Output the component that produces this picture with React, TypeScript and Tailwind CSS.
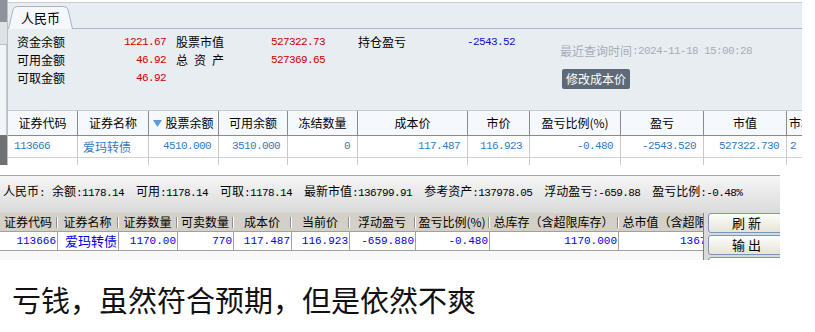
import type { ReactNode } from 'react'
import clsx from 'clsx'

const mono = "font-['Liberation_Mono',monospace] text-[11px] tracking-[-0.6px] whitespace-pre"

function Num({ children, className }: { children: ReactNode; className?: string }) {
  return <span className={clsx(mono, className)}>{children}</span>
}

const info: [string, string][][] = [
  [
    ['资金余额', '1221.67'],
    ['股票市值', '527322.73'],
    ['持仓盈亏', '-2543.52'],
  ],
  [
    ['可用金额', '46.92'],
    ['总资产', '527369.65'],
  ],
  [['可取金额', '46.92']],
]

const topW = [
  'w-[70px]',
  'w-[71px]',
  'w-[70px]',
  'w-[69px]',
  'w-[70px]',
  'w-[110px]',
  'w-[62px]',
  'w-[91px]',
  'w-[83px]',
  'w-[83px]',
  'w-[40px]',
]
const topHead = ['证券代码', '证券名称', '股票余额', '可用余额', '冻结数量', '成本价', '市价', '盈亏比例(%)', '盈亏', '市值', '市场']
const topData = ['113666', '爱玛转债', '4510.000', '3510.000', '0', '117.487', '116.923', '-0.480', '-2543.520', '527322.730', '2']

const botW = [
  'w-[58px]',
  'w-[61px]',
  'w-[59px]',
  'w-[56px]',
  'w-[58px]',
  'w-[58px]',
  'w-[66px]',
  'w-[74px]',
  'w-[129px]',
  'w-[129px]',
]
const botHead = ['证券代码', '证券名称', '证券数量', '可卖数量', '成本价', '当前价', '浮动盈亏', '盈亏比例(%)', '总库存（含超限库存）', '总市值（含超限库存）']
const botData = ['113666', '爱玛转债', '1170.00', '770', '117.487', '116.923', '-659.880', '-0.480', '1170.000', '136799.910']

const summary: [string, string][] = [
  ['余额', ':1178.14'],
  ['可用', ':1178.14'],
  ['可取', ':1178.14'],
  ['最新市值', ':136799.91'],
  ['参考资产', ':137978.05'],
  ['浮动盈亏', ':-659.88'],
  ['盈亏比例', ':-0.48%'],
]

function TopPanel() {
  return (
    <div className="flex h-[165px] w-[802px]">
      {/* scrollbar strip on the left */}
      <div className="flex w-[7px] shrink-0 flex-col bg-[#e4e7ea]">
        <div className="h-[22px] bg-[#8d939a]" />
        <div className="h-[23px] border-b border-[#b8bec4] bg-[#dfe2e5]" />
        <div className="flex-1 border-r border-[#c2c7cc] bg-[#f4f5f6]" />
        <div className="h-[30px] bg-[#6f7275]" />
      </div>

      <div className="flex w-[795px] flex-col border-l border-[#b8c0c8]">
        <div className="h-[2px] bg-white" />
        <div className="flex min-h-0 flex-1 flex-col overflow-hidden border-t border-[#c9ccd0] bg-[#e8edf2]">
          {/* tab */}
          <div className="flex h-[26px] shrink-0 items-end border-b border-[#a9b8cc]">
            <div className="relative -mb-px flex h-[23px] w-[65px] items-center justify-center">
              <svg className="absolute inset-0" width="65" height="23" viewBox="0 0 65 23">
                <path
                  d="M0.5 23 L5 3.5 Q6 0.5 9.5 0.5 L55.5 0.5 Q59 0.5 60 3.5 L64.5 23"
                  fill="#f5f7fa"
                  stroke="#a3b3c8"
                />
              </svg>
              <span className="relative text-[13px] leading-[14px]">人民币</span>
            </div>
          </div>

          {/* account summary */}
          <div className="flex h-[81px] shrink-0 pl-[9px] pt-[4px] text-[12px]">
            <div className="flex flex-col">
              {info.map((row, r) => (
                <div key={r} className="flex h-[18px] items-center leading-[18px]">
                  {row.map(([label, value], i) => (
                    <div
                      key={label}
                      className={clsx(
                        'flex items-center justify-between',
                        i === 0 && 'w-[149px]',
                        i === 1 && 'ml-[10px] w-[149px]',
                        i === 2 && 'ml-[33px] w-[157px]',
                      )}
                    >
                      {label === '总资产' ? (
                        <span className="flex w-[48px] justify-between">
                          <span>总</span>
                          <span>资</span>
                          <span>产</span>
                        </span>
                      ) : (
                        <span>{label}</span>
                      )}
                      <Num className={i === 2 ? 'text-[#1010c8]' : 'text-[#c80000]'}>{value}</Num>
                    </div>
                  ))}
                </div>
              ))}
            </div>
            <div className="ml-[45px] flex flex-col pt-[11px]">
              <div className="flex h-[14px] items-center leading-[14px] text-[#a4aeba]">
                最近查询时间<Num>:2024-11-18 15:00:28</Num>
              </div>
              <div className="ml-[2px] mt-[11px] flex h-[20px] w-fit items-center rounded-[2px] bg-[#5e6a77] px-[4px] text-white">
                修改成本价
              </div>
            </div>
          </div>

          {/* holdings grid */}
          <div className="flex h-[26px] shrink-0 border-y border-t-[#c0ccda] border-b-[#8a8a8a] bg-[#f5f9fd] text-[12px]">
            {topHead.map((h, i) => (
              <div
                key={h}
                className={clsx(
                  topW[i],
                  'flex shrink-0 items-center border-r border-[#8a8a8a]',
                  i === 10 ? 'pl-[2px]' : 'justify-center',
                )}
              >
                {i === 2 && (
                  <svg width="9" height="7" viewBox="0 0 9 7" className="mr-[3px]">
                    <path d="M0 0 H9 L4.5 7 Z" fill="#5b9ad6" />
                  </svg>
                )}
                {h}
              </div>
            ))}
          </div>
          <div className="flex h-[22px] shrink-0 border-b border-[#d0d0d0] bg-white text-[#2e7bc4]">
            {topData.map((d, i) => (
              <div
                key={i}
                className={clsx(
                  topW[i],
                  'flex shrink-0 items-center border-r border-[#c8c8c8]',
                  i === 0 && 'pl-[6px]',
                  i === 1 && 'pl-[5px]',
                  i === 10 && 'pl-[3px]',
                  i > 1 && i < 10 && 'justify-end pr-[7px]',
                )}
              >
                {i === 1 ? <span className="text-[12px]">{d}</span> : <Num>{d}</Num>}
              </div>
            ))}
          </div>
          <div className="flex flex-1 bg-white">
            {topW.map((w, i) => (
              <div key={i} className={clsx(w, 'shrink-0 border-r border-[#c8c8c8]')} />
            ))}
          </div>
        </div>
      </div>
    </div>
  )
}

function BottomPanel() {
  return (
    <div className="mt-[10px] h-[85px] w-[780px] overflow-hidden border-t border-[#a6a6a6]">
      <div className="flex h-[37px] items-start bg-linear-to-b from-[#f6f6f6] to-[#dadada] pl-[3px] pt-[7px] text-[12px] leading-[16px]">
        <span className="w-[49px] shrink-0">
          人民币<Num>:</Num>
        </span>
        <div className="flex gap-[12px]">
          {summary.map(([label, value]) => (
            <span key={label} className="whitespace-nowrap">
              {label}
              <Num>{value}</Num>
            </span>
          ))}
        </div>
      </div>

      <div className="flex h-[47px] bg-[#d9d9d9]">
        <div className="flex w-[704px] shrink-0 flex-col overflow-hidden border-r border-[#7f7f7f] bg-[#f8f8f8]">
          <div className="flex h-[18px] shrink-0 bg-[#d4d0c8] text-[12px] leading-[14px]">
            {botHead.map((h, i) => (
              <div key={h} className={clsx(botW[i], 'flex shrink-0 items-center')}>
                <span className="flex-1 whitespace-nowrap text-center">{h}</span>
                <div className="h-[11px] w-[2px] border-x border-l-[#8f8f8f] border-r-white" />
              </div>
            ))}
          </div>
          <div className="flex h-[20px] shrink-0 border-y border-[#a0a0a0] bg-white text-[#0000f0]">
            {botData.map((d, i) => (
              <div
                key={i}
                className={clsx(botW[i], 'flex shrink-0 items-center justify-end border-r border-[#a0a0a0] pr-[1px]')}
              >
                {i === 1 ? (
                  <span className="text-[13px] leading-[14px]">{d}</span>
                ) : (
                  <span className="font-['Liberation_Mono',monospace] text-[11px] leading-[14px]">{d}</span>
                )}
              </div>
            ))}
          </div>
        </div>

        <div className="ml-[4px] flex w-[77px] shrink-0 flex-col gap-[2px] text-[13px]">
          {['刷 新', '输 出', ''].map((b, i) => (
            <div
              key={i}
              className="flex h-[20px] shrink-0 items-center justify-center whitespace-pre rounded-[3px] border border-[#7b97b8] bg-linear-to-b from-[#fdfdfb] to-[#e6e4d8]"
            >
              {b}
            </div>
          ))}
        </div>
      </div>
    </div>
  )
}

export default function App() {
  return (
    <div className="h-[332px] w-[815px] overflow-hidden bg-white font-['Noto_Sans_CJK_SC',sans-serif] text-black">
      <TopPanel />
      <BottomPanel />
      <div className="mt-[21px] pl-[12px] text-[29px] leading-[36px] text-[#111]">
        亏钱，虽然符合预期，但是依然不爽
      </div>
    </div>
  )
}
